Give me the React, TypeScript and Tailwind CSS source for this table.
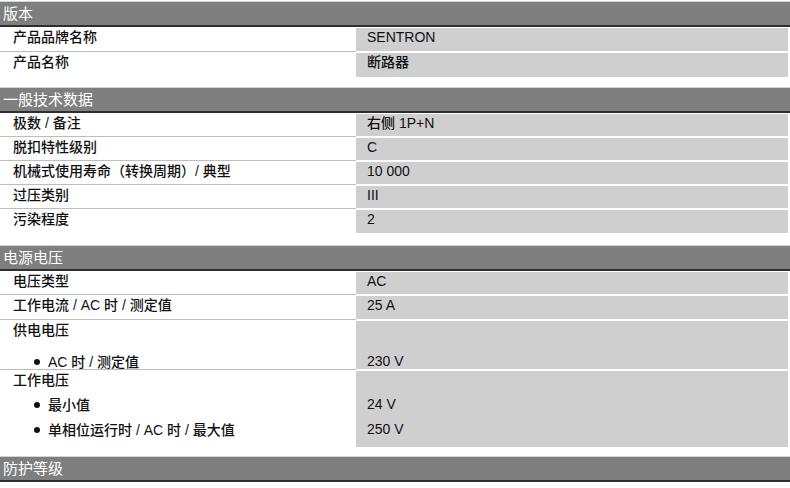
import React from 'react';

type Line = { text: string; value?: string; bullet?: boolean; h: number };
type Row = { lines: Line[] };
type Section = { title: string; gap: string; rows: Row[] };

const font = { fontFamily: '"Liberation Sans", "Noto Sans CJK SC", sans-serif' };

// h = line height without the 1px row separator
const sections: Section[] = [
  {
    title: "版本",
    gap: "mt-px",
    rows: [
      { lines: [{ text: "产品品牌名称", value: "SENTRON", h: 24 }] },
      { lines: [{ text: "产品名称", value: "断路器", h: 25 }] },
    ],
  },
  {
    title: "一般技术数据",
    gap: "mt-[10px]",
    rows: [
      { lines: [{ text: "极数 / 备注", value: "右侧 1P+N", h: 23 }] },
      { lines: [{ text: "脱扣特性级别", value: "C", h: 23 }] },
      { lines: [{ text: "机械式使用寿命（转换周期）/ 典型", value: "10 000", h: 23 }] },
      { lines: [{ text: "过压类别", value: "III", h: 23 }] },
      { lines: [{ text: "污染程度", value: "2", h: 24 }] },
    ],
  },
  {
    title: "电源电压",
    gap: "mt-[12px]",
    rows: [
      { lines: [{ text: "电压类型", value: "AC", h: 23 }] },
      { lines: [{ text: "工作电流 / AC 时 / 测定值", value: "25 A", h: 24 }] },
      {
        lines: [
          { text: "供电电压", h: 32 },
          { text: "AC 时 / 测定值", value: "230 V", bullet: true, h: 17 },
        ],
      },
      {
        lines: [
          { text: "工作电压", h: 25 },
          { text: "最小值", value: "24 V", bullet: true, h: 25 },
          { text: "单相位运行时 / AC 时 / 最大值", value: "250 V", bullet: true, h: 27 },
        ],
      },
    ],
  },
  { title: "防护等级", gap: "mt-[9px]", rows: [] },
];

const Header = ({ title, gap }: { title: string; gap: string }) => (
  <div className={`${gap} h-[26px] border-t border-[#d4d4d4] border-b-2 border-b-[#2e2e2e] bg-[#7f7f7f] pl-[3px] text-[15px] leading-[23px] text-white`}>
    {title}
  </div>
);

const App = () => {
  return (
    <div className="w-[790px] h-[488px] bg-white overflow-hidden" style={font}>
      {sections.map((s) => (
        <div key={s.title}>
          <Header title={s.title} gap={s.gap} />
          {s.rows.map((r, i) => {
            const last = i === s.rows.length - 1;
            return (
              <div key={i} className="flex pr-[2px]">
                <div className={`w-[356px] shrink-0 ${last ? "" : "border-b border-[#bdbdbd]"}`}>
                  {r.lines.map((l) => (
                    <div
                      key={l.text}
                      style={{ height: l.h }}
                      className={`pt-[1px] text-[14px] font-medium text-[#111] ${l.bullet ? "pl-[34px]" : "pl-[13px]"}`}
                    >
                      <div className="flex h-[18px] items-center">
                        {l.bullet && <span className="mr-[8px] h-[6px] w-[6px] rounded-full bg-[#111]" />}
                        {l.text}
                      </div>
                    </div>
                  ))}
                </div>
                <div className={`flex-1 bg-[#cfcfcf] mt-px ${last ? "" : "border-b border-white"}`}>
                  {r.lines.map((l, j) => (
                    <div
                      key={j}
                      style={{ height: j === 0 ? l.h - 1 : l.h }}
                      className="pl-[11px] text-[14px] font-medium leading-[18px] text-[#111]"
                    >
                      {l.value}
                    </div>
                  ))}
                </div>
              </div>
            );
          })}
        </div>
      ))}
    </div>
  );
};

export default App;
